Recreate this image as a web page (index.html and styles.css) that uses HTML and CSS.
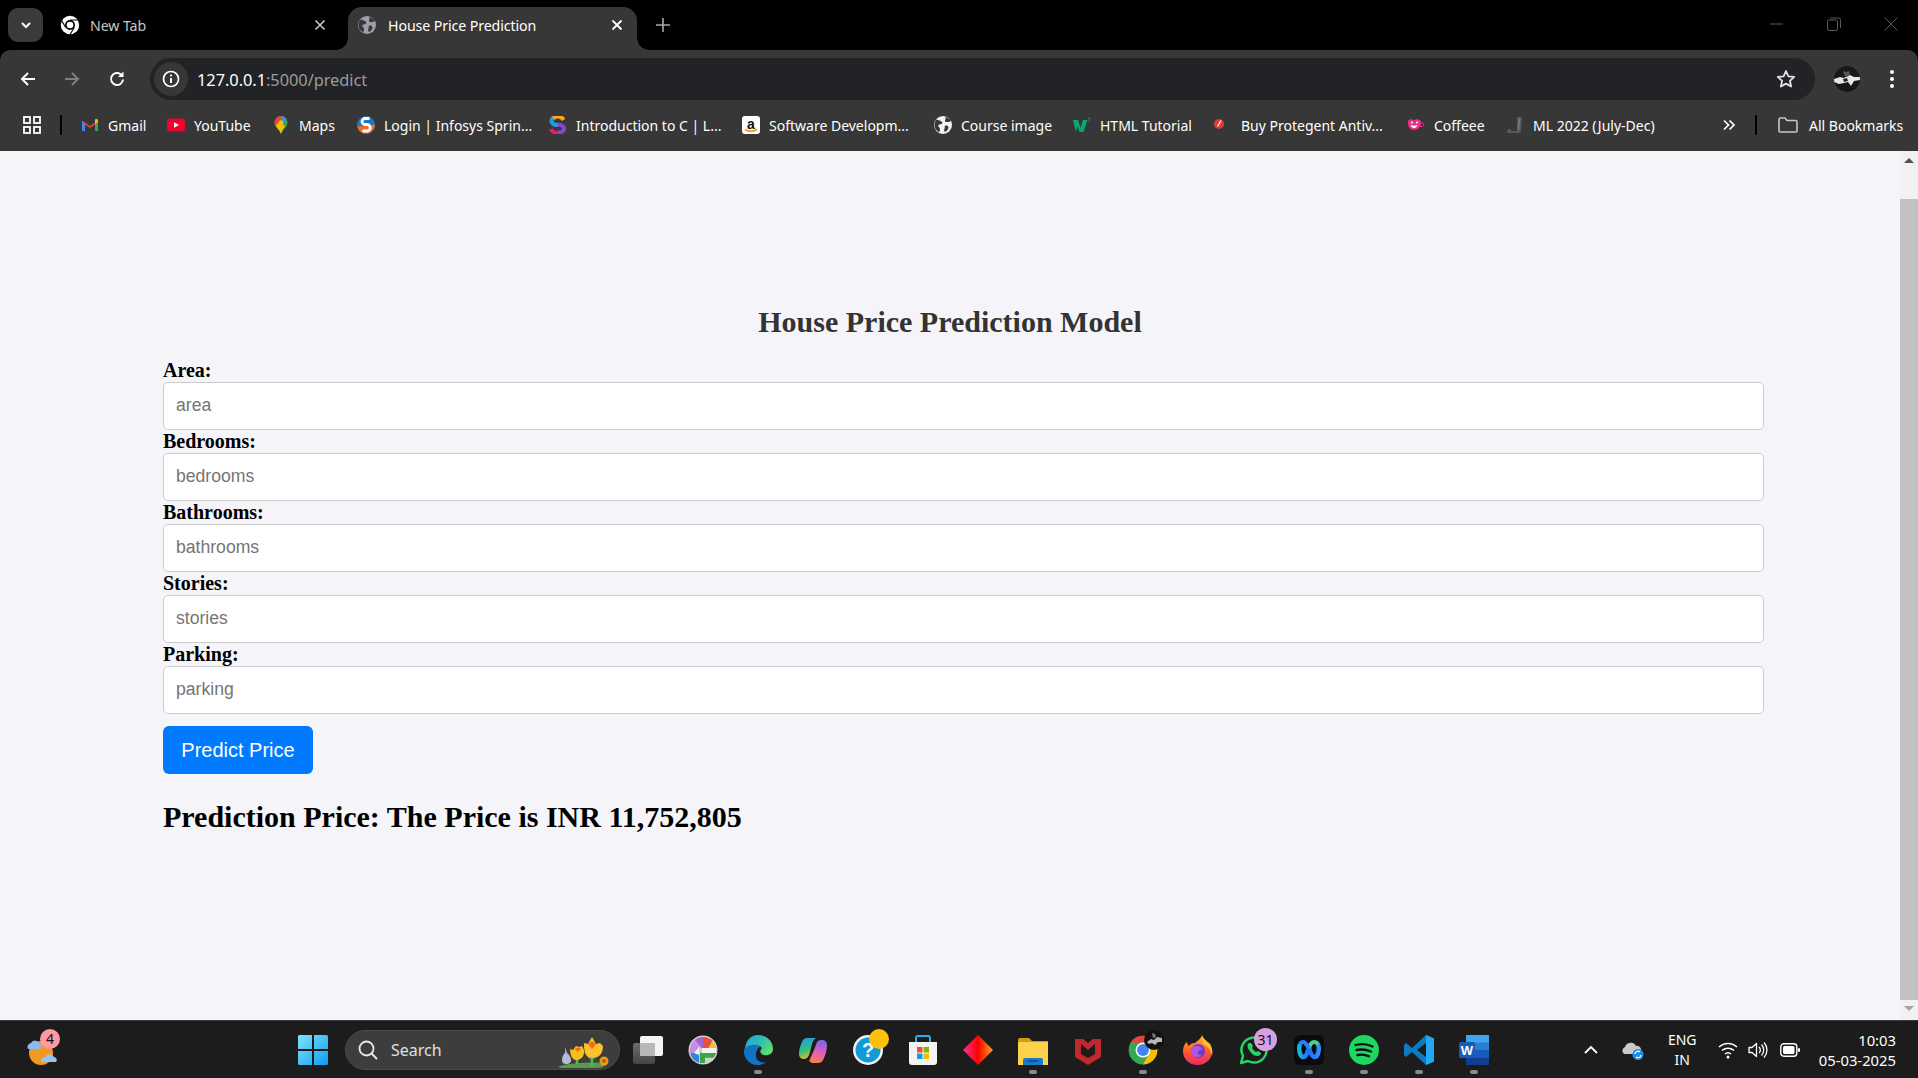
FILE: index.html
```html
<!DOCTYPE html>
<html lang="en">
<head>
<meta charset="utf-8">
<title>House Price Prediction</title>
<link rel="stylesheet" href="styles.css">
</head>
<body>
<div class="browser">
  <header class="tabstrip">
    <button class="tab-search"><svg width="14" height="14" viewBox="0 0 14 14"><path d="M3 5l4 4 4-4" fill="none" stroke="#fff" stroke-width="2"/></svg></button>
    <div class="tab tab-idle">
      <svg class="tab-icon" width="20" height="20" viewBox="0 0 48 48"><circle cx="24" cy="24" r="22" fill="#fff"/><circle cx="24" cy="24" r="12" fill="#000"/><circle cx="24" cy="24" r="8" fill="#fff"/><path d="M24 12h20M13.600 30 3.600 12.700M34.400 30 24 47" stroke="#000" stroke-width="2.600"/></svg>
      <span class="tab-title dim">New Tab</span>
      <svg class="tab-close" width="12" height="12" viewBox="0 0 12 12"><path d="M1.500 1.500l9 9M10.500 1.500l-9 9" stroke="#c7c7c7" stroke-width="1.600"/></svg>
    </div>
    <div class="tab tab-active">
      <svg class="tab-icon" width="18" height="18" viewBox="0 0 18 18"><circle cx="9" cy="9" r="9" fill="#9aa0a6"/><path d="M3 3.500c2 .5 4 1 5 2.500s-1 2.500-2.500 2.500-1.500 1-1 2 1.500 1 1.500 3-1 2.500-1.500 2.500C2 14 .5 12 .5 9S1.500 4.500 3 3.500zM11 1c1 1 .5 2.500 0 3.500s1 1.500 2.500 1.500 2.500-.5 3.500-1c-1-2-3.500-3.500-6-4zM11.500 9.500c1.500 0 3 .5 3 2s-2 4-3.500 4.500c-1-1-1-2-.5-3.500s0-3 1-3z" fill="#373737"/></svg>
      <span class="tab-title">House Price Prediction</span>
      <svg class="tab-close" width="12" height="12" viewBox="0 0 12 12"><path d="M1.500 1.500l9 9M10.500 1.500l-9 9" stroke="#fff" stroke-width="1.800"/></svg>
    </div>
    <svg class="tab-new" width="14" height="14" viewBox="0 0 14 14"><path d="M7 0v14M0 7h14" stroke="#a8a8a8" stroke-width="1.600"/></svg>
    <div class="win-controls">
      <svg width="14" height="14" viewBox="0 0 14 14"><path d="M0 7h13" stroke="#5a5a5a" stroke-width="1"/></svg>
      <svg width="14" height="14" viewBox="0 0 14 14"><rect x=".5" y="3" width="10" height="10.500" rx="1.500" fill="none" stroke="#5a5a5a"/><path d="M3 1h8.500a2 2 0 0 1 2 2v8" fill="none" stroke="#5a5a5a"/></svg>
      <svg width="14" height="14" viewBox="0 0 14 14"><path d="M.5.5l13 13M13.500.5l-13 13" stroke="#5a5a5a" stroke-width="1"/></svg>
    </div>
  </header>

  <nav class="toolbar">
    <svg class="nav-icon" width="18" height="18" viewBox="0 0 18 18"><path d="M16 9H3M9 3 3 9l6 6" fill="none" stroke="#fff" stroke-width="2"/></svg>
    <svg class="nav-icon nav-forward" width="18" height="18" viewBox="0 0 18 18"><path d="M2 9h13M9 3l6 6-6 6" fill="none" stroke="#7f7f7f" stroke-width="2"/></svg>
    <svg class="nav-icon nav-reload" width="18" height="18" viewBox="0 0 18 18"><path d="M15 9.500A6 6 0 1 1 13 4.500" fill="none" stroke="#fff" stroke-width="2"/><path d="M15.500 1.500v5.500H10z" fill="#fff"/></svg>
    <div class="omnibox">
      <span class="site-info"><svg width="18" height="18" viewBox="0 0 18 18"><circle cx="9" cy="9" r="7.500" fill="none" stroke="#fff" stroke-width="1.700"/><path d="M9 8v5" stroke="#fff" stroke-width="1.900"/><circle cx="9" cy="5.500" r="1.100" fill="#fff"/></svg></span>
      <span class="url"><span class="url-host">127.0.0.1</span>:5000/predict</span>
      <svg class="star" width="20" height="20" viewBox="0 0 20 20"><path d="M10 2l2.400 5.300 5.800.6-4.300 3.900 1.200 5.700L10 14.600l-5.100 2.900 1.200-5.700L1.800 7.900l5.800-.6z" fill="none" stroke="#e3e3e3" stroke-width="1.800" stroke-linejoin="round"/></svg>
    </div>
    <span class="avatar"><svg width="26" height="26" viewBox="0 0 26 26"><circle cx="13" cy="13" r="13" fill="#15171a"/><path d="M0 13l6-2 4 1 3-2 3-1 4 2 6 0v3l-6 1-3 5-3-4-4 1-5 1-5-2z" fill="#e6e6e6"/><path d="M9 5l3 1 3-1 1 4-3 2-3-2z" fill="#555"/><path d="M9 13l4-1 1 3-4 1z" fill="#222"/></svg></span>
    <svg class="kebab" width="6" height="20" viewBox="0 0 6 20"><circle cx="3" cy="3" r="2" fill="#fff"/><circle cx="3" cy="10" r="2" fill="#fff"/><circle cx="3" cy="17" r="2" fill="#fff"/></svg>
  </nav>

  <div class="bookmarks">
    <svg width="20" height="20" viewBox="0 0 20 20"><g fill="none" stroke="#fff" stroke-width="1.800"><rect x="2" y="2" width="6" height="6"/><rect x="12" y="2" width="6" height="6"/><rect x="2" y="12" width="6" height="6"/><rect x="12" y="12" width="6" height="6"/></g></svg>
    <span class="bar-sep"></span>
    <a class="bm"><svg class="bm-icon" viewBox="0 0 18 18"><path d="M1 15V4.500L9 10l8-5.500V15h-3V8.500L9 12 4 8.500V15z" fill="#ea4335"/><path d="M1 15h3V8.500L1 5z" fill="#4285f4"/><path d="M14 15h3V5l-3 3.500z" fill="#34a853"/><path d="M14 8.500 17 6V4.500c0-1.500-1.500-2-2.500-1.300L14 3.500z" fill="#fbbc04"/></svg>Gmail</a>
    <a class="bm"><svg class="bm-icon" viewBox="0 0 18 18"><rect x="0" y="2.500" width="18" height="13" rx="3.500" fill="#f4002f"/><path d="M7 6.200v5.600L12 9z" fill="#fff"/></svg>YouTube</a>
    <a class="bm"><svg class="bm-icon" viewBox="0 0 18 18"><path d="M9 0a6.500 6.500 0 0 1 6.500 6.500C15.500 11 11 13 9 18 7 13 2.500 11 2.500 6.500A6.500 6.500 0 0 1 9 0z" fill="#34a853"/><path d="M4.300 2 13 10.500c-1.500 1.700-3 3.500-4 7.500-1-3-3-5-4.800-7.200z" fill="#fbbc04"/><path d="M4.300 2A6.500 6.500 0 0 1 9 0v4.200A2.300 2.300 0 0 0 6.800 6.500l-3.600 3C2.700 8.500 2.500 7.500 2.500 6.500 2.500 4.800 3.200 3.200 4.300 2z" fill="#ea4335"/><path d="M9 0a6.500 6.500 0 0 1 5.600 3.200L11 6.500A2.300 2.300 0 0 0 9 4.200z" fill="#4285f4"/><circle cx="9" cy="6.500" r="2.300" fill="#fbbc04"/></svg>Maps</a>
    <a class="bm"><svg class="bm-icon" viewBox="0 0 18 18"><circle cx="9" cy="9" r="9" fill="#1f76c4"/><path d="M.2 10.500 18 8.500A9 9 0 0 1 .2 10.500z" fill="#ee6c22"/><path d="M12.500 2.500H8a2.800 2.800 0 0 0 0 6h2a2.800 2.800 0 0 1 0 6.500H5.500" fill="none" stroke="#fff" stroke-width="2.800"/></svg>Login | Infosys Sprin...</a>
    <a class="bm"><svg class="bm-icon" viewBox="0 0 18 18"><g fill="none" stroke-width="4"><path d="M14.500 4A6.500 6.500 0 0 0 3.500 3" stroke="#f5a623"/><path d="M4 2C1 5 2.500 9 9 9" stroke="#1c9be6"/><path d="M2 13a5.500 5.500 0 0 0 7 3.500" stroke="#ec1d67"/><path d="M9 8.500c4.500 0 7 3 5.500 6-1 1.500-3 2-5.500 2" stroke="#8e44c9"/></g></svg>Introduction to C | L...</a>
    <a class="bm"><svg class="bm-icon" viewBox="0 0 18 18"><rect x="0" y="0" width="18" height="18" rx="3" fill="#fff"/><text class="amazon-a" x="9" y="12.500" text-anchor="middle">a</text><path d="M3 13.500c4 2.500 8 2.500 12 0" fill="none" stroke="#f90" stroke-width="1.500"/></svg>Software Developm...</a>
    <a class="bm"><svg class="bm-icon" viewBox="0 0 18 18"><circle cx="9" cy="9" r="9" fill="#f2f2f2"/><path d="M2.500 3.500c2 .5 4 1 5.500 2.500s-1 2.500-2.500 2.500-1.500 1-1 2 1.500 1 1.500 3-1 2.500-1.500 2.500C2 14 .5 12 .5 9s1-4.500 2-5.500zM11 1c1 1 .5 2.500 0 3.500s1 1.500 2.500 1.500 2.500-.5 3.500-1c-1-2-3.500-3.500-6-4zM11.500 9.500c1.500 0 3 .5 3 2s-2 4-3.500 4.500c-1-1-1-2-.5-3.500s0-3 1-3z" fill="#373737"/></svg>Course image</a>
    <a class="bm"><svg class="bm-icon" viewBox="0 0 18 18"><path d="M0 4h5l2.500 8L10 4h4.500l-4 12H6.500L4.500 10 3 16z" fill="#04aa6d"/><path d="M15 2h2l-1 1.500c1 0 1 2-.5 2" fill="none" stroke="#04aa6d" stroke-width=".8"/></svg>HTML Tutorial</a>
    <a class="bm"><svg class="bm-icon" viewBox="0 0 18 18"><circle cx="5" cy="8" r="5" fill="#e53935"/><path d="M3.500 10.500 7 4.500" stroke="#fff" stroke-width="1.200"/></svg>Buy Protegent Antiv...</a>
    <a class="bm"><svg class="bm-icon" viewBox="0 0 18 18"><path d="M1 6c0-2 2-3 4-2.500.8.200 1.500.7 2 1.300.5-.6 1.200-1.100 2-1.300 2-.5 5 .5 5 2.500 0 4-2 8-7 8S1 10 1 6z" fill="#ef2f88"/><path d="M14 7h1.500a1.800 1.800 0 0 1 0 3.500H13" fill="none" stroke="#ef2f88"/><path d="M3.500 9c2 1 5 1 7 0-.5 2-2 3-3.500 3S4 11 3.500 9z" fill="#fff"/><circle cx="5" cy="6.500" r="1" fill="#fff"/><circle cx="10" cy="6.500" r="1" fill="#fff"/></svg>Coffeee</a>
    <a class="bm"><svg class="bm-icon" viewBox="0 0 18 18"><path d="M11 1h4l1 1-1 13-1 2H2l-1-1 1-3h3v2h6z" fill="#55585c"/><path d="M13 2l1 1-1 11h-1z" fill="#85888c"/></svg>ML 2022 (July-Dec)</a>
    <svg class="more" width="14" height="12" viewBox="0 0 14 12"><path d="M2 1.500 6.500 6 2 10.500M7.500 1.500 12 6l-4.500 4.500" fill="none" stroke="#fff" stroke-width="1.700"/></svg>
    <span class="bar-sep"></span>
    <a class="bm"><svg class="bm-folder" width="20" height="16" viewBox="0 0 20 16"><path d="M1 14V2.500A1.500 1.500 0 0 1 2.500 1h4.500l2 2.500h8.500A1.500 1.500 0 0 1 19 5v9a1 1 0 0 1-1 1H2a1 1 0 0 1-1-1z" fill="none" stroke="#c7c7c7" stroke-width="1.600"/></svg>All Bookmarks</a>
  </div>

  <div class="viewport">
    <main class="page">
      <h1 class="title">House Price Prediction Model</h1>
      <form class="form">
        <label class="field-label" for="area">Area:</label>
        <input class="field" id="area" type="text" placeholder="area">
        <label class="field-label" for="bedrooms">Bedrooms:</label>
        <input class="field" id="bedrooms" type="text" placeholder="bedrooms">
        <label class="field-label" for="bathrooms">Bathrooms:</label>
        <input class="field" id="bathrooms" type="text" placeholder="bathrooms">
        <label class="field-label" for="stories">Stories:</label>
        <input class="field" id="stories" type="text" placeholder="stories">
        <label class="field-label" for="parking">Parking:</label>
        <input class="field" id="parking" type="text" placeholder="parking">
        <button class="submit" type="button">Predict Price</button>
      </form>
      <h2 class="result">Prediction Price: The Price is INR 11,752,805</h2>
    </main>
    <div class="scrollbar">
      <span class="arrow-up"></span>
      <span class="thumb"></span>
      <span class="arrow-down"></span>
    </div>
  </div>
</div>

<footer class="taskbar">
  <div class="weather">
    <svg width="38" height="40" viewBox="0 0 38 40"><circle cx="17" cy="23" r="12" fill="#f09a22"/><path d="M4 19a4 4 0 0 1 3-6 5 5 0 0 1 9 1 3 3 0 0 1 0 5z" fill="#8fb8ee"/><path d="M17 32a4 4 0 0 1 4-5 5 5 0 0 1 9 0 3 3 0 0 1 2 5z" fill="#9cc2f2"/></svg>
    <span class="badge badge-pink">4</span>
  </div>
  <svg class="start" width="30" height="30" viewBox="0 0 30 30"><defs><linearGradient id="win" x1="0" y1="0" x2="1" y2="1"><stop offset="0" stop-color="#7fe3fb"/><stop offset="1" stop-color="#0f9bf3"/></linearGradient></defs><path d="M0 1.500A1.500 1.500 0 0 1 1.500 0H14v14H0zM16 0h12.500A1.500 1.500 0 0 1 30 1.500V14H16zM0 16h14v14H1.500A1.500 1.500 0 0 1 0 28.500zM16 16h14v12.500a1.500 1.500 0 0 1-1.500 1.500H16z" fill="url(#win)"/></svg>
  <div class="search">
    <svg width="22" height="22" viewBox="0 0 22 22"><circle cx="9.500" cy="9.500" r="7" fill="none" stroke="#e8e8e8" stroke-width="1.800"/><path d="M14.500 14.500 20 20" stroke="#e8e8e8" stroke-width="2"/></svg>
    <span class="search-text">Search</span>
    <svg class="flowers" width="54" height="32" viewBox="0 0 54 32"><path d="M1 31c10-5 42-5 50-4-3 3-6 5-10 5H6c-2 0-4-.5-5-1z" fill="#5b9a4c"/><path d="M5 24c0-4 2-6 3-7 .5-2 .3-4-.5-6 1.500 2 2 4 2.500 6 2 1.500 4 4 4 7 0 3-2 4-4.500 4S5 27 5 24z" fill="#b6b9d6"/><path d="M20 28V20M35 30V18" stroke="#59b45a" stroke-width="2.500"/><path d="M35 26l-8-10 3 1zM35 26l8-10-3 1z" fill="#59b45a"/><path d="M13 13l3 1 3-4 3 1 3-1 2 4c.5 4-1 9-6.500 10S13 18 13 13z" fill="#f8bd1e"/><path d="M18 13l3-1.500L24 13l-3 3z" fill="#ee6d12"/><path d="M27 7l4 1 4-7 4 7 4-1 3 3c0 8-4 12-11 12s-8-7-8-15z" fill="#fbc22b"/><path d="M31 8l4-3 4 3-4 5z" fill="#f0700f"/><circle cx="47" cy="25" r="4.500" fill="#e99a16"/><circle cx="47" cy="25" r="1.800" fill="#a85a08"/></svg>
  </div>
  <div class="pinned">
    <span class="pin"><svg class="pin-icon" viewBox="0 0 30 30"><defs><linearGradient id="tv" x1="0" y1="0" x2="0" y2="1"><stop offset="0" stop-color="#6e6e6e"/><stop offset="1" stop-color="#444"/></linearGradient></defs><rect x="0" y="8" width="22" height="21" rx="2.500" fill="url(#tv)"/><rect x="7" y="1" width="23" height="20" rx="2" fill="#f4f4f4"/><rect x="7" y="8" width="15" height="13" rx="1" fill="#b8b8b8"/></svg></span>
    <span class="pin"><svg class="pin-icon" viewBox="0 0 30 30"><circle cx="15" cy="15" r="14.500" fill="#cfcfcf"/><path d="M15 15 6.500 5A13 13 0 0 1 15 2z" fill="#a463d6"/><path d="M15 2a13 13 0 0 1 9.500 4L19.500 15H15z" fill="#e9503c"/><path d="M24.500 6A13 13 0 0 1 28 15H19.500z" fill="#f6c21d"/><path d="M2 18h26a13 13 0 0 1-2.500 4.700H17v5.100a13 13 0 0 1-5 .1V18z" fill="#3da53f"/><path d="M6.500 5A13 13 0 0 0 2 15v3h9v-8z" fill="#c58fe0"/><path d="M2.300 18H11v10a13 13 0 0 1-8.700-10z" fill="#2e86e0"/><path d="M14 13h14v5H14zM6 18l5-6v8z" fill="#f2f2f2"/></svg></span>
    <span class="pin pin-open"><svg class="pin-icon" viewBox="0 0 30 30"><defs><linearGradient id="edge" x1="0" y1="0" x2="1" y2=".7"><stop offset="0" stop-color="#1f9fe0"/><stop offset=".6" stop-color="#33c6a8"/><stop offset="1" stop-color="#5fdc6f"/></linearGradient></defs><path d="M15 0c8.500 0 15 6 15 14 0 5-5 7-9 6-5-1-4-5-2-7-3-4-14-3-17 6C1 8 6 0 15 0z" fill="url(#edge)"/><path d="M1 15c-1 8 6 15 13 15 4 0 7-1 9-3-7 2-11-3-10-9 1-4 3-6 5-7-8-3-16 0-17 4z" fill="#1173c5"/></svg></span>
    <span class="pin"><svg class="pin-icon" viewBox="0 0 30 30"><defs><linearGradient id="cop1" x1=".3" y1="0" x2=".6" y2="1"><stop offset="0" stop-color="#1f9ee8"/><stop offset=".55" stop-color="#35c07a"/><stop offset="1" stop-color="#f6b81f"/></linearGradient><linearGradient id="cop2" x1=".6" y1="0" x2=".4" y2="1"><stop offset="0" stop-color="#7f64e8"/><stop offset=".6" stop-color="#ec5fae"/><stop offset="1" stop-color="#f3824a"/></linearGradient></defs><path d="M20 28H14l-3-2 5-11 3-8c1-1.500 3-2 5-2 3 0 5 2 5 5 0 5-1.500 10-3.500 14-1 3-3.500 4-5.500 4z" fill="url(#cop2)"/><path d="M9 3h9c-2 1-3 3-4 6l-2 8c-1 4-2.500 7-6 7-3 0-5-2-5-5 0-5 1.500-9 3-12 1-3 3-4 5-4z" fill="url(#cop1)"/></svg></span>
    <span class="pin"><svg class="pin-icon" viewBox="0 0 30 30"><circle cx="15" cy="15" r="15" fill="#f2f2f2"/><circle cx="15" cy="15" r="12.500" fill="#0f9bd7"/><text class="help-mark" x="15" y="22" text-anchor="middle">?</text></svg><span class="badge-yellow"></span></span>
    <span class="pin"><svg class="pin-icon" viewBox="0 0 30 30"><path d="M8 7V3a2 2 0 0 1 2-2h10a2 2 0 0 1 2 2v4" fill="none" stroke="#27b0ee" stroke-width="2"/><path d="M1 7h28v20a3 3 0 0 1-3 3H4a3 3 0 0 1-3-3z" fill="#f3f3f3"/><rect x="9" y="12" width="5.500" height="5.500" fill="#f25022"/><rect x="15.500" y="12" width="5.500" height="5.500" fill="#7fba00"/><rect x="9" y="18.500" width="5.500" height="5.500" fill="#00a4ef"/><rect x="15.500" y="18.500" width="5.500" height="5.500" fill="#ffb900"/></svg></span>
    <span class="pin"><svg class="pin-icon" viewBox="0 0 30 30"><defs><linearGradient id="dia"><stop offset="0" stop-color="#ff2f92"/><stop offset=".5" stop-color="#f00"/><stop offset="1" stop-color="#f7a51d"/></linearGradient></defs><path d="M15 0 30 15 15 30 0 15z" fill="url(#dia)"/></svg></span>
    <span class="pin pin-open"><svg class="pin-icon" viewBox="0 0 30 30"><path d="M0 5a2 2 0 0 1 2-2h9l3 3h16v4H0z" fill="#d99a0b"/><path d="M0 7h30v23H0z" fill="#fbd249"/><path d="M7 23h16a2 2 0 0 1 2 2v5H5v-5a2 2 0 0 1 2-2z" fill="#1a79c9"/><path d="M10 26h10" stroke="#0d4f8b" stroke-width="1.500"/></svg></span>
    <span class="pin"><svg class="pin-icon" viewBox="0 0 30 30"><path d="M2 4h8l5 4 5-4h8v18l-13 8-13-8z" fill="#c0282d"/><path d="M8 9v10l7 4 7-4V9l-7 6z" fill="#1c1c1c"/></svg></span>
    <span class="pin pin-open"><svg class="pin-icon" viewBox="0 0 48 48"><circle cx="24" cy="24" r="23" fill="#34a853"/><path d="M4.100 12.500A23 23 0 0 1 43.900 12.500H24z" fill="#ea4335"/><path d="M43.900 12.500A23 23 0 0 1 24 47l9.500-17z" fill="#fbbc04"/><circle cx="24" cy="24" r="12" fill="#fff"/><circle cx="24" cy="24" r="9.500" fill="#4285f4"/></svg><svg class="chrome-avatar" width="20" height="20" viewBox="0 0 20 20"><circle cx="10" cy="10" r="10" fill="#111"/><path d="M3 12l4-3 3 1 3-3 5 1v4l-4 0-3 3-3-2-3 1z" fill="#b5b5b5"/><path d="M8 3l3 1 1 3-3 1z" fill="#777"/></svg></span>
    <span class="pin"><svg class="pin-icon" viewBox="0 0 30 30"><defs><linearGradient id="fx" x1="0" y1="0" x2="0" y2="1"><stop offset="0" stop-color="#ffbd23"/><stop offset=".55" stop-color="#ff5a2c"/><stop offset="1" stop-color="#e8296a"/></linearGradient></defs><path d="M19 0c1 4 5 6 8 9 3 5 3 11-1 16-3 3-7 5-11 5C6 30 0 24 0 16c0-3 1-7 4-9 0 2 1 3 2 4 1-2 3-3 6-3 2-2 6-4 7-8z" fill="url(#fx)"/><path d="M19 0c1 4 5 6 8 9 2 4 3 8 2 12-1-6-4-10-9-12 0-3-1-5-1-9z" fill="#fbc02d"/><circle cx="15" cy="16" r="7" fill="#6c3bc8"/><path d="M9 12c3-2 9-2 11 3-3-1-5 1-5 3s2 3 4 2c-2 3-7 3-10 0-2-3-1-6 0-8z" fill="#b055e0"/></svg></span>
    <span class="pin"><svg class="pin-icon" viewBox="0 0 30 30"><path d="M2 28l2-7A12.500 12.500 0 1 1 9 26z" fill="none" stroke="#25d366" stroke-width="2.500" stroke-linejoin="round"/><path d="M10 8c-2 1-2 4 0 7s5 6 8 6 4-2 4-3l-3-2-2 1c-2-1-3-3-4-4l1-2-2-3z" fill="#25d366"/></svg><span class="badge badge-lilac">31</span></span>
    <span class="pin pin-open"><svg class="pin-icon" viewBox="0 0 30 30"><defs><linearGradient id="wx" x1="0" y1="0" x2="1" y2="0"><stop offset="0" stop-color="#16b6d6"/><stop offset=".5" stop-color="#1d6bff"/><stop offset="1" stop-color="#2f8fff"/></linearGradient></defs><rect width="30" height="30" rx="6" fill="#0b0b0f"/><path d="M6 9c-2 5 0 13 3.500 13S14 15 15 13c1 3 2 9 5.500 9S26 14 24 9" fill="none" stroke="url(#wx)" stroke-width="4.500"/><path d="M15 13c1-3 3-6 5-6s3 .5 4 2.500" fill="none" stroke="#49d08a" stroke-width="4"/><path d="M6 9c1-2 2-2 3.500-2s3 3 5.500 6" fill="none" stroke="#2a7fff" stroke-width="4"/></svg></span>
    <span class="pin pin-open"><svg class="pin-icon" viewBox="0 0 30 30"><circle cx="15" cy="15" r="15" fill="#1ed760"/><path d="M6.500 10c6-1.500 12-1 17 1.500M7.500 15c5-1 10-.5 14.500 1.500M8.500 20c4-.8 8-.4 11.500 1.200" fill="none" stroke="#111" stroke-width="2.300" stroke-linecap="round"/></svg></span>
    <span class="pin pin-open"><svg class="pin-icon" viewBox="0 0 30 30"><path d="M22 0l8 3.500v23L22 30 8 17 2 22l-2-2v-10l2-2 6 5z" fill="#0a7cc4"/><path d="M22 0l8 3.500v23L22 30z" fill="#23a9f2"/><path d="M22 8 13 15l9 7z" fill="#1c1c1c"/></svg></span>
    <span class="pin pin-open"><svg class="pin-icon" viewBox="0 0 30 30"><rect x="7" y="0" width="23" height="30" rx="1.500" fill="#2b7cd3"/><rect x="7" y="0" width="23" height="7.500" fill="#41a5ee"/><rect x="7" y="15" width="23" height="7.500" fill="#185abd"/><rect x="7" y="22.500" width="23" height="7.500" fill="#103f91"/><rect x="0" y="7" width="16" height="16" rx="1.500" fill="#185abd"/><text class="word-mark" x="8" y="19.500" text-anchor="middle">W</text></svg></span>
  </div>
  <div class="tray">
    <svg class="tray-chevron" width="16" height="10" viewBox="0 0 16 10"><path d="M2 8l6-6 6 6" fill="none" stroke="#fff" stroke-width="1.800"/></svg>
    <svg class="tray-cloud" width="22" height="22" viewBox="0 0 22 22"><path d="M2 15a4 4 0 0 1 1-7 6 6 0 0 1 11-1 4 4 0 0 1 2 8z" fill="#c9c9c9"/><circle cx="16" cy="15.500" r="5.500" fill="#1d8fe6"/><path d="M13 15a3 3 0 0 1 5-2M19 16a3 3 0 0 1-5 2" fill="none" stroke="#fff" stroke-width="1.200"/></svg>
    <div class="lang"><span>ENG</span><span>IN</span></div>
    <svg class="tray-wifi" width="20" height="18" viewBox="0 0 20 18"><path d="M1 6a13 13 0 0 1 18 0M4 9.500a9 9 0 0 1 12 0M7 13a4.500 4.500 0 0 1 6 0" fill="none" stroke="#fff" stroke-width="1.500"/><circle cx="10" cy="16" r="1.500" fill="#fff"/></svg>
    <svg class="tray-vol" width="20" height="18" viewBox="0 0 20 18"><path d="M1 6.500h3L8.500 2.500v13L4 11.500H1z" fill="none" stroke="#fff" stroke-width="1.300" stroke-linejoin="round"/><path d="M11 6a4 4 0 0 1 0 6M13.500 3.500a8 8 0 0 1 0 11M16 1.500a11 11 0 0 1 0 15" fill="none" stroke="#fff" stroke-width="1.300"/></svg>
    <svg class="tray-batt" width="20" height="14" viewBox="0 0 20 14"><rect x=".8" y=".8" width="16" height="12.400" rx="3" fill="none" stroke="#fff" stroke-width="1.400"/><rect x="3" y="3" width="11.500" height="8" rx="1.500" fill="#fff"/><rect x="18" y="5" width="2" height="4" rx="1" fill="#fff"/></svg>
    <div class="clock"><span>10:03</span><span>05-03-2025</span></div>
  </div>
</footer>
</body>
</html>
```

FILE: styles.css
```css
* { box-sizing: border-box; }
html, body { height: 100%; }
body {
  margin: 0;
  width: 1918px;
  height: 1078px;
  overflow: hidden;
  display: flex;
  flex-direction: column;
  font-family: "Noto Sans", "Open Sans", sans-serif;
  background: #000;
}
.browser { flex: 1; display: flex; flex-direction: column; min-height: 0; }

/* tab strip */
.tabstrip { height: 50px; flex: none; background: #000; display: flex; align-items: flex-end; padding-left: 8px; color: #fff; }
.tab-search { width: 35px; height: 34px; margin-bottom: 8px; border: 0; padding: 0; border-radius: 10px; background: #3a3a3a; display: flex; align-items: center; justify-content: center; }
.tab { height: 43px; display: flex; align-items: center; font-size: 14px; }
.tab-idle { width: 300px; margin-left: 5px; padding: 0 22px 7px 12px; }
.tab-idle .tab-icon { margin-right: 10px; }
.tab-active { width: 289px; padding: 0 14px 7px 10px; background: #373737; border-radius: 14px 14px 0 0; position: relative; }
.tab-active::before, .tab-active::after { content: ""; position: absolute; bottom: 0; width: 12px; height: 12px; background: radial-gradient(circle at 0 0, #000 11.500px, #373737 12px); }
.tab-active::before { left: -12px; }
.tab-active::after { right: -12px; background: radial-gradient(circle at 100% 0, #000 11.500px, #373737 12px); }
.tab-icon { flex: none; margin-right: 12px; }
.tab-title { flex: 1; white-space: nowrap; font-size: 14.200px; letter-spacing: -.1px; }
.dim { color: #c7c7c7; }
.tab-close { flex: none; }
.tab-new { margin: 0 0 18px 19px; }
.win-controls { margin-left: auto; width: 148px; height: 50px; padding: 0 20px 19px 0; display: flex; align-items: flex-end; justify-content: space-between; }

/* toolbar */
.toolbar { height: 51px; flex: none; background: #373737; border-radius: 10px 10px 0 0; padding: 8px 0 0 19px; display: flex; align-items: flex-start; }
.nav-icon { flex: none; margin-top: 12px; margin-right: 26px; }
.nav-forward { margin-right: 27px; }
.nav-reload { margin-right: 24px; }
.omnibox { flex: none; width: 1665px; height: 42px; border-radius: 21px; background: #222326; display: flex; align-items: center; padding: 0 19px 0 4px; }
.site-info { width: 34px; height: 34px; border-radius: 50%; background: #373737; display: flex; align-items: center; justify-content: center; flex: none; }
.url { margin-left: 9px; color: #9b9b9b; font-size: 16.400px; letter-spacing: -.05px; white-space: nowrap; flex: 1; }
.url-host { color: #fff; }
.avatar { flex: none; width: 26px; height: 26px; margin: 8px 0 0 19px; border-radius: 50%; overflow: hidden; display: block; }
.avatar svg { display: block; }
.kebab { flex: none; margin: 11px 0 0 29px; }

/* bookmarks */
.bookmarks {
  height: 50px;
  flex: none;
  background: #373737;
  display: grid;
  grid-template-columns: 38px 21px 86px 105px 85px 192px 193px 192px 139px 141px 193px 99px 216px 33px 23px 1fr;
  align-items: center;
  padding: 0 0 2px 22px;
  color: #fff;
  font-size: 14px;
}
.bar-sep { width: 2px; height: 20px; background: #000; border-radius: 1px; }
.bm { display: flex; align-items: center; white-space: nowrap; }
.bm-icon { width: 18px; height: 18px; flex: none; margin-right: 9px; }
.bm-folder { flex: none; margin-right: 11px; }
.amazon-a { font: bold 14px "Liberation Sans", sans-serif; fill: #111; }
.help-mark { font: bold 20px "Liberation Sans", sans-serif; fill: #fff; }
.word-mark { font: bold 13px "Liberation Sans", sans-serif; fill: #fff; }

/* page */
.viewport { flex: 1; display: flex; min-height: 0; background: #f4f4f9; }
.page { flex: 1; padding-top: 153px; }
.title { margin: 0 0 20px; text-align: center; font: bold 30px/35px "Liberation Serif", serif; color: #333; }
.form { width: 1574px; margin: 0 auto; }
.field-label { display: block; font: bold 20px/23px "Liberation Serif", serif; color: #000; }
.field { display: block; box-sizing: content-box; width: 100%; height: 22px; padding: 11px 13px 13px 12px; border: 1px solid #ccc; border-radius: 5px; background: #fff; font: 17.600px/22px "Liberation Sans", sans-serif; outline: 0; }
.field::placeholder { color: #757575; opacity: 1; }
.submit { display: block; width: 150px; height: 48px; margin-top: 12px; border: 0; border-radius: 6px; background: #007bff; color: #fff; font: 20px "Liberation Sans", sans-serif; }
.result { width: 1574px; margin: 25px auto 0; font: bold 30px/35px "Liberation Serif", serif; color: #000; }

/* scrollbar */
.scrollbar { width: 18px; flex: none; background: #f1f1f1; display: flex; flex-direction: column; align-items: center; }
.arrow-up { margin-top: 7px; width: 0; height: 0; border: 5px solid transparent; border-top: 0; border-bottom: 5px solid #505050; }
.thumb { width: 18px; height: 801px; margin-top: 36px; background: #c1c1c1; }
.arrow-down { margin-top: 6px; width: 0; height: 0; border: 5px solid transparent; border-bottom: 0; border-top: 5px solid #a3a3a3; }

/* taskbar */
.taskbar { height: 58px; flex: none; background: #1c1c1c; border-top: 1px solid #3a3a3a; display: flex; align-items: center; color: #fff; }
.weather { width: 38px; height: 40px; margin-left: 24px; position: relative; flex: none; }
.badge { position: absolute; display: flex; align-items: center; justify-content: center; border-radius: 50%; color: #111; font-size: 14px; }
.badge-pink { right: 2px; top: -1px; width: 20px; height: 20px; background: #ff9aa2; }
.start { flex: none; margin-left: 236px; }
.search { flex: none; width: 275px; height: 40px; margin-left: 17px; border-radius: 20px; background: #3d3d3d; border: 1px solid #4a4a4a; display: flex; align-items: center; padding-left: 11px; color: #e0e0e0; font-size: 16px; position: relative; }
.search-text { margin-left: 12px; }
.flowers { position: absolute; right: 8px; top: 5px; }
.pinned { display: flex; margin-left: .5px; flex: none; }
.pin { width: 55.050px; height: 57px; display: flex; align-items: center; justify-content: center; position: relative; flex: none; }
.pin-icon { width: 30px; height: 30px; }
.pin-open::after { content: ""; position: absolute; bottom: 4px; left: 50%; margin-left: -4px; width: 8px; height: 4px; border-radius: 2px; background: #8a8a8a; }
.badge-yellow { position: absolute; right: 6.500px; top: 8px; width: 20px; height: 20px; border-radius: 50%; background: #fcc00d; }
.chrome-avatar { position: absolute; right: 7px; top: 9px; }
.badge-lilac { right: 4px; top: 6.500px; width: 23px; height: 23px; background: #d8a0e0; font-size: 14px; }
.tray { flex: 1; display: flex; align-items: center; padding-right: 22px; }
.tray-chevron { flex: none; margin-left: 82px; }
.tray-cloud { flex: none; margin-left: 23px; }
.lang { flex: none; width: 50px; margin-left: 13px; display: flex; flex-direction: column; align-items: center; font-size: 14px; line-height: 20px; }
.tray-wifi { flex: none; margin-left: 11px; }
.tray-vol { flex: none; margin-left: 10px; }
.tray-batt { flex: none; margin-left: 12px; }
.clock { margin-left: auto; display: flex; flex-direction: column; align-items: flex-end; font-size: 14.800px; line-height: 20px; }
```
